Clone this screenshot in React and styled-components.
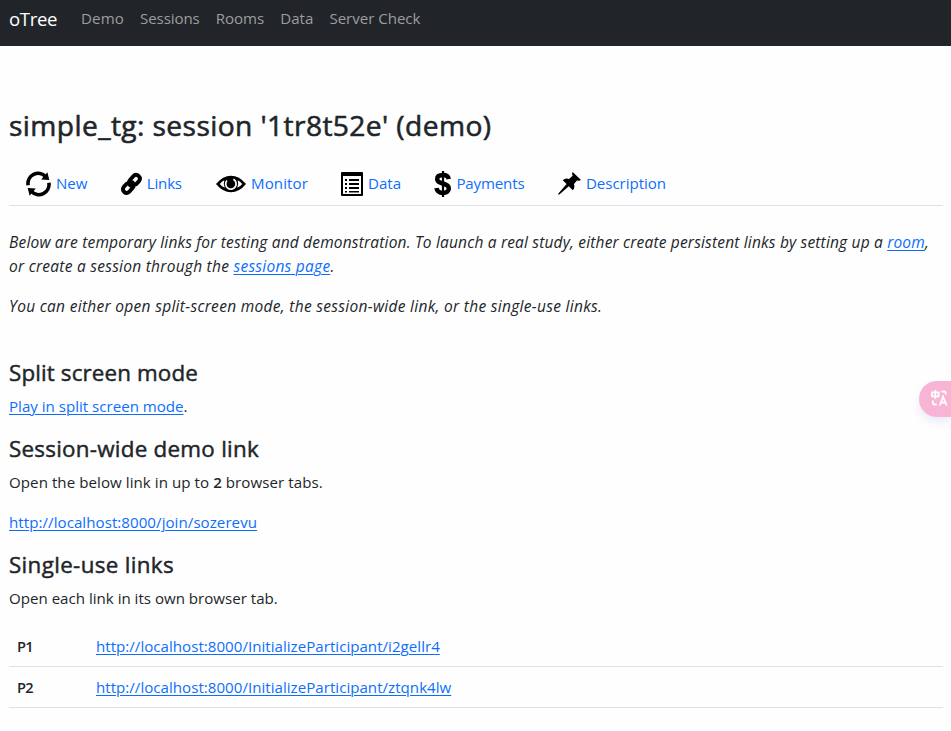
import React from 'react';
import styled, { createGlobalStyle } from 'styled-components';

const GlobalStyle = createGlobalStyle`
  * { box-sizing: border-box; }
  body {
    margin: 0;
    background: #fefefe;
    color: #212529;
    font: 400 15.1px/24px "Segoe UI", "Open Sans", sans-serif;
    overflow: hidden;
  }
`;

const Page = styled.div`
  min-height: 731px;
`;
const Navbar = styled.nav`
  display: flex;
  height: 46px;
  padding: 6px 9px 0;
  background: #212529;
`;
const Brand = styled.a`
  width: 64px;
  padding-top: 1px;
  color: #fff;
  font-size: 18.6px;
  letter-spacing: -0.35px;
`;
const NavLink = styled.a`
  padding: 0 8px;
  color: #9b9d9e;
  letter-spacing: ${(p) => p.$track || 0}px;
`;
const Container = styled.main`
  padding: 62px 8px 0 9px;
`;
const Title = styled.h2`
  margin: 0;
  height: 34px;
  font-size: 28.2px;
  font-weight: 500;
  line-height: 34px;
  letter-spacing: 0.39px;
  -webkit-text-stroke: 0.55px currentColor;
`;
const Tabs = styled.div`
  display: flex;
  gap: 34px;
  height: 44px;
  margin: 20px 0 24px;
  padding-left: 17px;
  border-bottom: 1px solid #dee2e6;
`;
const Tab = styled.a`
  display: flex;
  gap: ${(p) => p.$gap}px;
  height: 43px;
  align-items: center;
  color: #0d6efd;
  width: ${(p) => p.$width}px;
  letter-spacing: ${(p) => p.$track || 0}px;
  white-space: nowrap;
  svg { flex: none; }
`;
const TabLabel = styled.span`
  margin-bottom: 2px;
`;
const Paragraph = styled.p`
  margin: 0 0 16px;
  letter-spacing: ${(p) => p.$track || 0}px;
`;
const Notes = styled.div`
  margin-bottom: 40px;
  font-style: italic;
  font-size: 15.5px;
  white-space: nowrap;
`;
const Line = styled.span`
  display: block;
  letter-spacing: ${(p) => p.$track}px;
`;
const Heading = styled.h3`
  margin: 0 0 8px;
  padding-top: 1px;
  height: 28px;
  font-size: 22.4px;
  font-weight: 500;
  line-height: 28px;
  letter-spacing: ${(p) => p.$track}px;
  -webkit-text-stroke: 0.45px currentColor;
`;
const Link = styled.a`
  color: #0d6efd;
  text-decoration: underline;
  text-underline-offset: 2px;
  text-decoration-thickness: 1px;
`;
const Strong = styled.b`
  font-weight: 600;
`;
const Row = styled.div`
  display: flex;
  height: 41px;
  padding: 8px;
  border-bottom: 1px solid #dee2e6;
  letter-spacing: 0.02px;
`;
const Participant = styled.div`
  width: 79px;
  font-weight: 600;
  font-size: 14.6px;
  letter-spacing: -0.6px;
`;
const Translate = styled.div`
  position: fixed;
  right: 0;
  top: 381px;
  width: 32px;
  height: 36px;
  padding: 7px 0 0 11px;
  border-radius: 18px 0 0 18px;
  background: #f8b4d4;
  box-shadow: 0 5px 9px rgba(110, 120, 220, 0.14);
`;

const RefreshIcon = () => (
  <svg width="25" height="26" viewBox="0 0 25 26">
    <g fill="none" stroke="#000" strokeWidth="3.6">
      <path d="M2.1 14.2A10.3 10.3 0 0 1 19.6 5.4" />
      <path d="M22.9 11.8A10.3 10.3 0 0 1 5.4 20.6" />
    </g>
    <path d="M21.4 1.2L23.3 9L15.2 8.5Z" />
    <path d="M3.6 24.8L1.7 17L9.8 17.5Z" />
  </svg>
);
const ChainIcon = () => (
  <svg width="21" height="24" viewBox="0 0 21 24">
    <g fill="none" stroke="#000" strokeWidth="3.9" strokeLinecap="round" strokeLinejoin="round">
      <path d="M9.3 13.4C7.6 11.5 7.8 9.4 9.2 7.8L12.3 4.2C14 2.2 16 2.3 17.5 3.8C19.2 5.4 19.3 7.4 18 9.2L15.2 12.2" />
      <path d="M11.5 10.4C13.2 12.3 13 14.3 11.6 15.9L8.5 19.5C6.8 21.4 4.8 21.5 3.3 20C1.6 18.3 1.7 16.3 3 14.6L5.6 11.9" />
    </g>
  </svg>
);
const EyeIcon = () => (
  <svg width="30" height="18" viewBox="0 0 31 18">
    <path d="M0 9Q7 .5 15.5 .5T31 9Q24 17.5 15.5 17.5T0 9Z" />
    <path d="M3.9 9Q6 6.3 8.6 5.1Q7.2 9.2 9.1 13Q6 11.8 3.9 9ZM27.1 9Q25 6.3 22.4 5.1Q23.8 9.2 21.9 13Q25 11.8 27.1 9Z" fill="#fff" />
    <path d="M11.3 5.4A5.4 5.4 0 1 0 18 4.2" fill="none" stroke="#fff" strokeWidth="1.8" />
  </svg>
);
const ListIcon = () => (
  <svg width="22" height="24" viewBox="0 0 22 24">
    <path fillRule="evenodd" d="M1 0H21Q22 0 22 1V23Q22 24 21 24H1Q0 24 0 23V1Q0 0 1 0ZM2 4V22H20V4Z" />
    <path d="M4 7h2v2H4zM8 7h10v2H8zM4 11h2v2H4zM8 11h10v2H8zM4 15h2v2H4zM8 15h10v2H8zM4 19h2v1.6H4zM8 19h10v1.6H8z" />
  </svg>
);
const DollarIcon = () => (
  <svg width="18" height="26" viewBox="0 0 18 26">
    <path d="M14.7 8.1C14.2 5.2 12 4.1 9 4.1C5.7 4.1 3.2 5.4 3.2 8.2C3.2 14 14.8 11 14.8 17.6C14.8 20.5 12.2 21.9 9 21.9C5.4 21.9 3 20.3 2.5 17" fill="none" stroke="#000" strokeWidth="4.5" />
    <path d="M7.9 0h2.2v26H7.9z" />
  </svg>
);
const PinIcon = () => (
  <svg width="23" height="23" viewBox="0 0 23 23">
    <path d="M14.7 0L23 8Q20.8 9.5 19.2 8.3L16 12Q17.2 16 14.8 18.2L10.8 14.3L1 22.7L0 22L8.6 12.1L4.7 8.2Q7.5 5.7 11 7L14.7 3.8Q13.3 2 14.7 0Z" />
  </svg>
);
const TranslateIcon = () => (
  <svg width="20" height="20" viewBox="0 0 20 20" fill="none" stroke="#fff" strokeWidth="1.8">
    <path d="M2 4.3H8.6V8.3H2ZM5.3 2V11M11.5 3.5H14.2Q15.7 3.5 15.7 5V6.5M2.8 12.5V15Q2.8 16.5 4.3 16.5H6.8" />
    <path d="M9.8 17.5L13.1 8.8L16.6 17.5M11 14.7H15.3" />
  </svg>
);

const navItems = [['Demo', 0.15], ['Sessions', -0.12], ['Rooms', 0], ['Data', 0], ['Server Check', -0.03]];
const tabs = [
  ['New', RefreshIcon, 60.8, 0, 5],
  ['Links', ChainIcon, 61.2, -0.2, 5],
  ['Monitor', EyeIcon, 91, 0.1, 5],
  ['Data', ListIcon, 59.4, 0, 5],
  ['Payments', DollarIcon, 89.6, -0.15, 4],
  ['Description', PinIcon, 108, -0.05, 5],
];
const participants = [['P1', 'i2gellr4'], ['P2', 'ztqnk4lw']];

export default function App() {
  return (
    <Page>
      <GlobalStyle />
      <Navbar>
        <Brand>oTree</Brand>
        {navItems.map(([label, track]) => <NavLink key={label} $track={track}>{label}</NavLink>)}
      </Navbar>
      <Container>
        <Title>simple_tg: session '1tr8t52e' (demo)</Title>
        <Tabs>
          {tabs.map(([label, Icon, width, track, gap]) => (
            <Tab key={label} $width={width} $track={track} $gap={gap}><Icon /><TabLabel>{label}</TabLabel></Tab>
          ))}
        </Tabs>
        <Notes>
          <Paragraph>
            <Line $track={0.18}>Below are temporary links for testing and demonstration. To launch a real study, either create persistent links by setting up a <Link>room</Link>,</Line>
            <Line $track={0.26}>or create a session through the <Link>sessions page</Link>.</Line>
          </Paragraph>
          <Paragraph $track={0.3}>You can either open split-screen mode, the session-wide link, or the single-use links.</Paragraph>
        </Notes>
        <Heading $track={0.13}>Split screen mode</Heading>
        <Paragraph><Link>Play in split screen mode</Link>.</Paragraph>
        <Heading $track={0.25}>Session-wide demo link</Heading>
        <Paragraph $track={0.06}>Open the below link in up to <Strong>2</Strong> browser tabs.</Paragraph>
        <Paragraph $track={0.05}><Link>http://localhost:8000/join/sozerevu</Link></Paragraph>
        <Heading $track={0.34}>Single-use links</Heading>
        <Paragraph>Open each link in its own browser tab.</Paragraph>
        {participants.map(([name, code]) => (
          <Row key={name}>
            <Participant>{name}</Participant>
            <Link>http://localhost:8000/InitializeParticipant/{code}</Link>
          </Row>
        ))}
      </Container>
      <Translate><TranslateIcon /></Translate>
    </Page>
  );
}
